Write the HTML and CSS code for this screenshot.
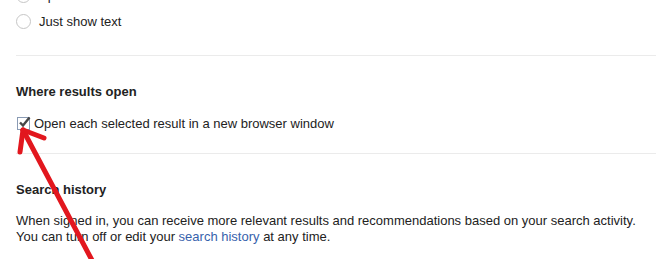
FILE: index.html
```html
<!DOCTYPE html>
<html>
<head>
    <title>Search settings</title>
    <link rel="stylesheet" href="styles.css">
</head>
<body>
    <div class="settings">
        <div class="options">
            <div class="option">
                <span class="radio"></span>
                <span>Speak answers for voice search</span>
            </div>
            <div class="option">
                <span class="radio"></span>
                <span>Just show text</span>
            </div>
        </div>

        <div class="divider"></div>

        <h2 class="heading">Where results open</h2>
        <div class="check-row">
            <span class="checkbox">
                <svg width="15" height="15" viewBox="0 0 15 15">
                    <path d="M3 7.5 L6 10.5 L12.5 2.5" fill="none" stroke="#474747" stroke-width="2.4"/>
                </svg>
            </span>
            <span>Open each selected result in a new browser window</span>
        </div>

        <div class="divider second"></div>

        <h2 class="heading">Search history</h2>
        <p class="text">
            When signed in, you can receive more relevant results and recommendations based on your search activity.<br>
            You can turn off or edit your <a href="#" class="link">search history</a> at any time.
        </p>
    </div>

    <svg class="arrow" width="656" height="259" viewBox="0 0 656 259">
        <g fill="none" stroke="#e2171e" stroke-width="5" stroke-linecap="round" stroke-linejoin="round">
            <path d="M94 264 L23 130"/>
            <path d="M23 130 L20 152"/>
            <path d="M23 130 L44 138"/>
        </g>
    </svg>
</body>
</html>
```

FILE: styles.css
```css
body{
    margin: 0;
    background-color: white;
    color: #222;
    font-family: "Liberation Sans", Arial, sans-serif;
    font-size: 13px;
    overflow: hidden;
    position: relative;
    height: 259px;
}

.settings{
    padding-left: 16px;
}

.options{
    margin-top: -18px;
}

.option{
    display: flex;
    align-items: center;
    height: 26px;
}

.radio{
    width: 13px;
    height: 13px;
    border: 1px solid #c6c6c6;
    border-radius: 50%;
    margin-right: 8px;
    box-sizing: content-box;
}

.divider{
    height: 1px;
    background-color: #ebebeb;
    margin-top: 21px;
}

.divider.second{
    margin-top: 22px;
}

.heading{
    font-size: 13px;
    font-weight: bold;
    line-height: 16px;
    margin: 28px 0 0 0;
}

.check-row{
    display: flex;
    align-items: center;
    height: 15px;
    margin-top: 16px;
}

.checkbox{
    position: relative;
    width: 11px;
    height: 11px;
    border: 1px solid #8a9bb4;
    margin-left: 1px;
    margin-right: 4px;
}

.checkbox svg{
    position: absolute;
    left: -1px;
    top: -3px;
}

.text{
    line-height: 16px;
    margin: 15px 0 0 0;
}

.link{
    color: #3762ac;
    text-decoration: none;
}

.arrow{
    position: absolute;
    left: 0;
    top: 0;
}
```
